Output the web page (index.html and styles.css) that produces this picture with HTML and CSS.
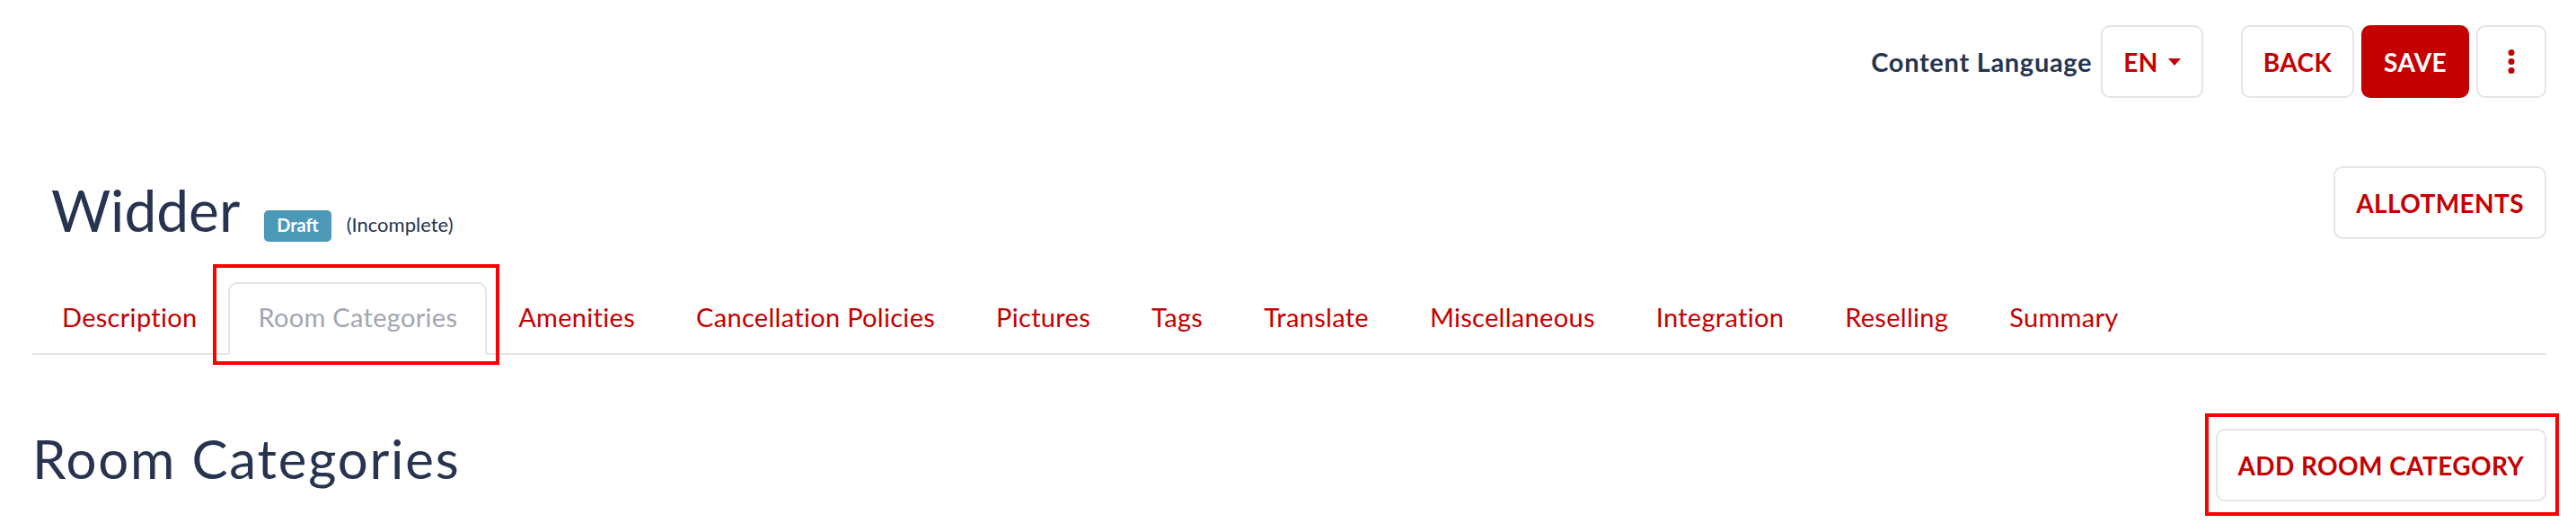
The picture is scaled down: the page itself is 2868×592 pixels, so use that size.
FILE: index.html
```html
<!DOCTYPE html>
<html lang="en">
<head>
<meta charset="utf-8">
<title>Widder – Room Categories</title>
<link rel="stylesheet" href="styles.css">
</head>
<body>
<div class="page">
  <header class="toolbar">
    <span class="lang-label">Content Language</span>
    <button class="btn btn-lang">EN<span class="caret"></span></button>
    <div class="actions">
      <button class="btn">BACK</button>
      <button class="btn btn-primary">SAVE</button>
      <button class="btn btn-more" aria-label="More">
        <svg width="8" height="27" viewBox="0 0 8 27"><circle cx="4" cy="3.5" r="3.5"/><circle cx="4" cy="13.5" r="3.5"/><circle cx="4" cy="23.5" r="3.5"/></svg>
      </button>
    </div>
  </header>

  <div class="title-row">
    <h1 class="title"><span>Widder</span><span class="badge">Draft</span><small class="status">(Incomplete)</small></h1>
    <button class="btn">ALLOTMENTS</button>
  </div>

  <nav class="tabs">
    <a class="tab">Description</a>
    <a class="tab active marked">Room Categories</a>
    <a class="tab">Amenities</a>
    <a class="tab">Cancellation Policies</a>
    <a class="tab">Pictures</a>
    <a class="tab">Tags</a>
    <a class="tab">Translate</a>
    <a class="tab">Miscellaneous</a>
    <a class="tab">Integration</a>
    <a class="tab">Reselling</a>
    <a class="tab">Summary</a>
  </nav>

  <div class="section-head">
    <h2 class="section-title">Room Categories</h2>
    <button class="btn marked-btn">ADD ROOM CATEGORY</button>
  </div>
</div>
</body>
</html>
```
FILE: styles.css
```css
* { box-sizing: border-box; }

html, body {
  margin: 0;
  padding: 0;
  background: #ffffff;
}

body {
  font-family: Lato, "Open Sans", sans-serif;
  color: #26344f;
}

.page {
  min-height: 592px;
  padding: 28px 33px 0 36px;
}

/* ---------- buttons ---------- */
.btn {
  display: inline-flex;
  align-items: center;
  justify-content: center;
  height: 81px;
  padding: 0 23px;
  border: 2px solid #e5e5e5;
  border-radius: 10px;
  background: #ffffff;
  color: #c40000;
  font-family: Lato, "Open Sans", sans-serif;
  font-weight: 700;
  font-size: 28px;
  letter-spacing: 0.4px;
  line-height: 1;
  cursor: pointer;
}

.btn-primary {
  background: #c40000;
  border-color: #c40000;
  color: #ffffff;
}

.btn-more {
  padding: 0 33px;
}
.btn-more svg { fill: #c40000; display: block; }

.caret {
  display: inline-block;
  width: 0;
  height: 0;
  margin-left: 11px;
  border-left: 7.5px solid transparent;
  border-right: 7.5px solid transparent;
  border-top: 8px solid #c40000;
}

/* ---------- toolbar ---------- */
.toolbar {
  display: flex;
  justify-content: flex-end;
  align-items: center;
}

.lang-label {
  font-weight: 700;
  font-size: 29px;
  letter-spacing: 0.7px;
  margin-right: 10px;
  color: #26344f;
}

.actions {
  display: flex;
  gap: 8px;
  margin-left: 42px;
}

/* ---------- title row ---------- */
.title-row {
  display: flex;
  justify-content: space-between;
  align-items: flex-start;
  margin-top: 76px;
}

.title {
  display: flex;
  align-items: baseline;
  margin: 17px 0 0 21px;
  font-size: 64px;
  line-height: 64px;
  font-weight: 400;
  color: #26344f;
}

.badge {
  margin-left: 27px;
  padding: 6px 14px 9px;
  border-radius: 5px;
  background: #4b98b7;
  color: #ffffff;
  font-size: 20px;
  line-height: 20px;
  font-weight: 700;
}

.status {
  margin-left: 17px;
  font-size: 22px;
  line-height: 22px;
  font-weight: 400;
  color: #26344f;
}

/* ---------- tabs ---------- */
.tabs {
  display: flex;
  margin-top: 45px;
  border-bottom: 2px solid #e5e5e5;
}

.tab {
  display: block;
  margin: 0 2px -2px 0;
  padding: 19px 31px 23px;
  border: 2px solid transparent;
  border-radius: 10px 10px 0 0;
  font-size: 29px;
  letter-spacing: 0.3px;
  line-height: 35px;
  color: #c40000;
  white-space: nowrap;
}

.tab.active {
  color: #a1a6b2;
  background: #ffffff;
  border-color: #e5e5e5 #e5e5e5 #ffffff;
}

/* red annotation frames lying over the content */
.marked { position: relative; }
.marked::after {
  content: "";
  position: absolute;
  top: -22px;
  right: -16px;
  bottom: -13px;
  left: -19px;
  border: 4px solid #ff0000;
  pointer-events: none;
}

.marked-btn { position: relative; }
.marked-btn::after {
  content: "";
  position: absolute;
  top: -19px;
  right: -16px;
  bottom: -18px;
  left: -14px;
  border: 4px solid #ff0000;
  pointer-events: none;
}

/* ---------- section head ---------- */
.section-head {
  display: flex;
  justify-content: space-between;
  align-items: flex-start;
  margin-top: 82px;
}

.section-title {
  margin: 3px 0 0;
  font-size: 60px;
  line-height: 60px;
  letter-spacing: 1.8px;
  font-weight: 400;
  color: #26344f;
}
```
